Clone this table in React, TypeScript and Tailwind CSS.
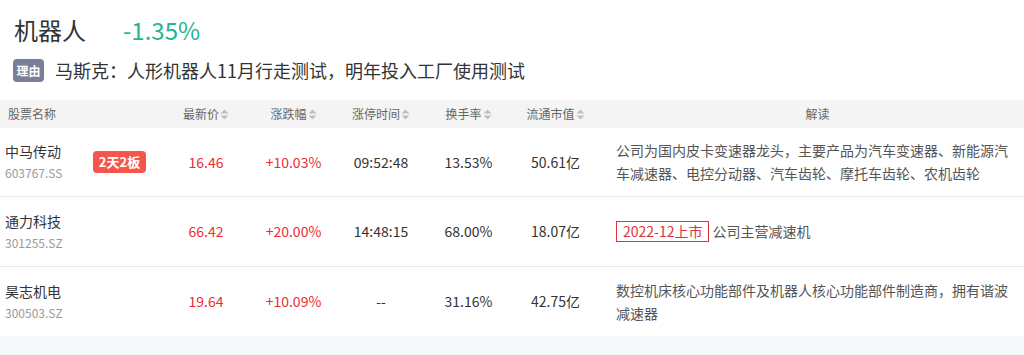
import React from "react";

const font = { fontFamily: '"Noto Sans CJK SC", "Noto Sans", sans-serif' };

function SortIcon() {
  return (
    <svg width="9" height="13" viewBox="0 0 9 13" className="ml-[1px] shrink-0">
      <path d="M4.5 1.5 L8.5 5.5 L0.5 5.5 Z" fill="#bfbfbf" />
      <path d="M4.5 11.5 L8.5 7.5 L0.5 7.5 Z" fill="#bfbfbf" />
    </svg>
  );
}

type Row = {
  name: string;
  code: string;
  badge?: string;
  price: string;
  change: string;
  time: string;
  turnover: string;
  cap: string;
  tag?: string;
  desc: string;
  h: string;
  border: boolean;
};

const rows: Row[] = [
  {
    name: "中马传动",
    code: "603767.SS",
    badge: "2天2板",
    price: "16.46",
    change: "+10.03%",
    time: "09:52:48",
    turnover: "13.53%",
    cap: "50.61亿",
    desc: "公司为国内皮卡变速器龙头，主要产品为汽车变速器、新能源汽车减速器、电控分动器、汽车齿轮、摩托车齿轮、农机齿轮",
    h: "h-[69px]",
    border: true,
  },
  {
    name: "通力科技",
    code: "301255.SZ",
    price: "66.42",
    change: "+20.00%",
    time: "14:48:15",
    turnover: "68.00%",
    cap: "18.07亿",
    tag: "2022-12上市",
    desc: "公司主营减速机",
    h: "h-[70px]",
    border: true,
  },
  {
    name: "昊志机电",
    code: "300503.SZ",
    price: "19.64",
    change: "+10.09%",
    time: "--",
    turnover: "31.16%",
    cap: "42.75亿",
    desc: "数控机床核心功能部件及机器人核心功能部件制造商，拥有谐波减速器",
    h: "h-[69px]",
    border: false,
  },
];

export default function App() {
  return (
    <div className="w-[1024px] h-[355px] bg-[#f7f8fa] overflow-hidden" style={font}>
      <div className="bg-white">
        <div className="pl-[14px] pt-[12px] h-[48px] flex items-center">
          <span className="text-[24px] leading-[36px] text-[#333]">机器人</span>
          <span className="ml-[37px] text-[24px] leading-[36px] text-[#1fb68f]">-1.35%</span>
        </div>
        <div className="pl-[13px] mt-[11px] h-[23px] flex items-center">
          <span className="w-[31px] h-[23px] rounded-[4px] bg-[#7a7f99] text-white text-[12px] font-bold flex items-center justify-center">
            理由
          </span>
          <span className="ml-[11px] text-[18px] leading-[23px] text-[#333]">
            马斯克：人形机器人11月行走测试，明年投入工厂使用测试
          </span>
        </div>
        <div className="mt-[18px]">
          <div className="h-[28px] bg-[#f4f4f4] flex items-center text-[12px] text-[#666]">
            <div className="w-[162px] pl-[8px]">股票名称</div>
            <div className="w-[88px] flex items-center justify-center">最新价<SortIcon /></div>
            <div className="w-[87px] flex items-center justify-center">涨跌幅<SortIcon /></div>
            <div className="w-[88px] flex items-center justify-center">涨停时间<SortIcon /></div>
            <div className="w-[87px] flex items-center justify-center">换手率<SortIcon /></div>
            <div className="w-[87px] flex items-center justify-center">流通市值<SortIcon /></div>
            <div className="flex-1 pl-[17px] pr-[5px] text-center">解读</div>
          </div>
          {rows.map((r) => (
            <div
              key={r.code}
              className={`${r.h} box-border flex items-center ${r.border ? "border-b border-[#e8e8e8]" : ""}`}
            >
              <div className="w-[162px] pl-[5px] flex items-center">
                <div className="w-[88px] flex flex-col">
                  <span className="text-[14px] leading-[21px] text-[#333]">{r.name}</span>
                  <span className="text-[12px] leading-[21px] text-[#999]">{r.code}</span>
                </div>
                {r.badge && (
                  <span className="w-[53px] h-[22px] rounded-[4px] bg-[#f5554a] text-white text-[13px] font-bold flex items-center justify-center">
                    {r.badge}
                  </span>
                )}
              </div>
              <div className="w-[88px] text-center text-[14px] text-[#ee2b35]">{r.price}</div>
              <div className="w-[87px] text-center text-[14px] text-[#ee2b35]">{r.change}</div>
              <div className="w-[88px] text-center text-[14px] text-[#333]">{r.time}</div>
              <div className="w-[87px] text-center text-[14px] text-[#333]">{r.turnover}</div>
              <div className="w-[87px] text-center text-[14px] text-[#333]">{r.cap}</div>
              <div className="flex-1 pl-[17px] pr-[5px] text-[14px] leading-[23px] text-[#555]">
                {r.tag && (
                  <span className="inline-block border border-[#e0323c] text-[#e0323c] px-[6px] leading-[19px] mr-[3px]">
                    {r.tag}
                  </span>
                )}
                {r.desc}
              </div>
            </div>
          ))}
        </div>
      </div>
    </div>
  );
}
